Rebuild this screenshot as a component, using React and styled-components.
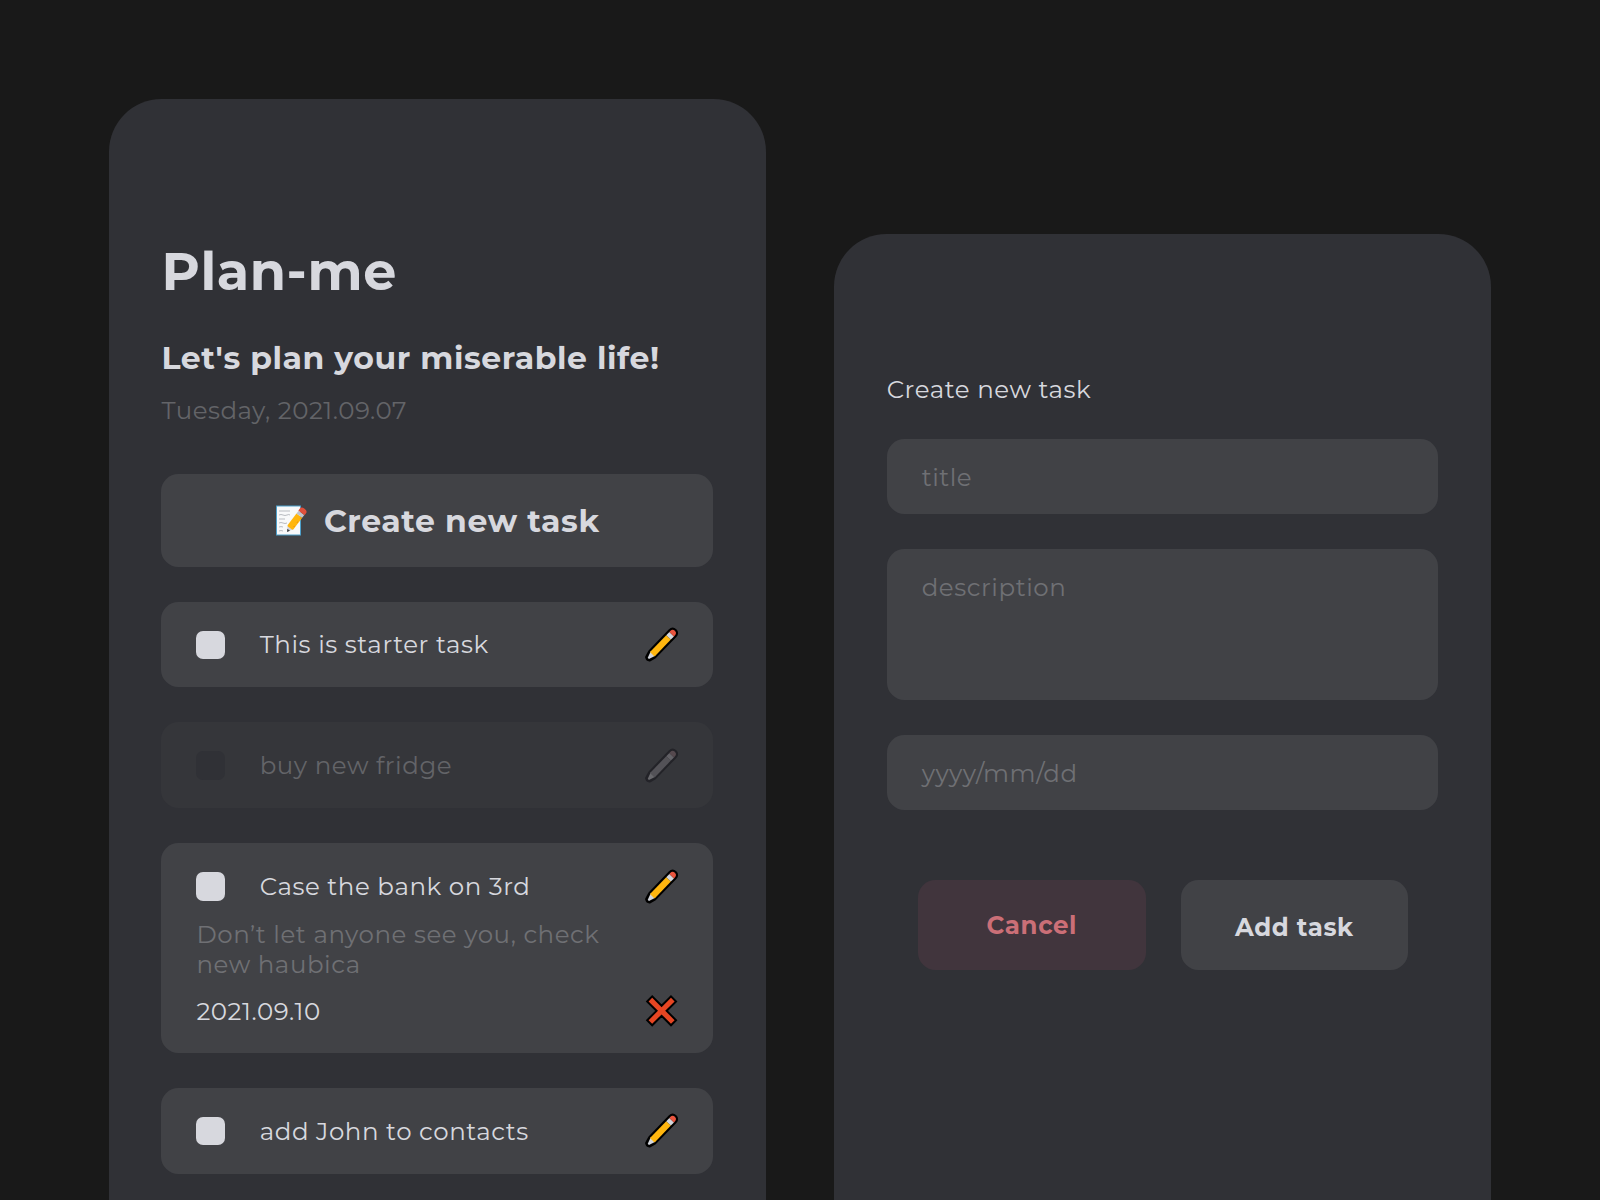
import React from 'react';
import styled, { createGlobalStyle } from 'styled-components';

const color = {
  background: '#191919',
  panel: '#303136',
  card: '#414246',
  cardDone: '#35363a',
  text: '#d7d8de',
  muted: '#636468',
  placeholder: '#6f7074',
  danger: '#cb6f77',
  dangerSurface: '#41353d',
};

const GlobalStyle = createGlobalStyle`
  *, *::before, *::after { box-sizing: border-box; }
  body {
    margin: 0;
    background: ${color.background};
    color: ${color.text};
    font-family: Montserrat, Inter, sans-serif;
    font-size: 24.5px;
    line-height: 30px;
    letter-spacing: 0.57px;
  }
  h1, h2, h3, p { margin: 0; }
`;

const Stage = styled.main`
  display: flex;
  align-items: flex-start;
  gap: 68.7px;
  width: 1600px;
  height: 1200px;
  padding-left: 109px;
  overflow: hidden;
`;

const Panel = styled.section`
  flex: none;
  display: flex;
  flex-direction: column;
  width: 656.6px;
  min-height: 1200px;
  margin-top: ${(p) => p.$top}px;
  padding: 140px 52.4px 0;
  border-radius: 52.5px 52.5px 0 0;
  background: ${color.panel};
`;

const Title = styled.h1`
  font-size: 52.5px;
  font-weight: 700;
  line-height: 64px;
`;

const Subtitle = styled.h2`
  margin-top: 36px;
  font-size: 31.5px;
  font-weight: 700;
  line-height: 38px;
  white-space: nowrap;
`;

const Today = styled.p`
  margin-top: 18px;
  color: ${color.muted};
  letter-spacing: 0.53px;
`;

const CreateButton = styled.button`
  display: flex;
  align-items: center;
  justify-content: center;
  gap: 18px;
  height: 93px;
  margin-top: 48.7px;
  padding: 1.2px 0 0;
  border: 0;
  border-radius: 17.5px;
  background: ${color.card};
  color: ${color.text};
  font: 700 31.5px/38px Montserrat, Inter, sans-serif;
  letter-spacing: 0.6px;
`;

const TaskList = styled.div`
  display: flex;
  flex-direction: column;
  gap: 35px;
  margin-top: 35px;
`;

const TaskCard = styled.article`
  min-height: 85.8px;
  padding: 29px 35px 27px;
  border-radius: 17.5px;
  background: ${(p) => (p.$done ? color.cardDone : color.card)};
  color: ${(p) => (p.$done ? color.muted : color.text)};
`;

const TaskRow = styled.div`
  display: flex;
  align-items: center;
  height: 28.5px;
`;

const Checkbox = styled.span`
  flex: none;
  width: 28.5px;
  height: 28.5px;
  margin-right: 34.8px;
  border-radius: 7px;
  background: ${(p) => (p.$done ? color.panel : color.text)};
`;

const TaskName = styled.h3`
  flex: 1;
  padding-bottom: 1px;
  font-size: inherit;
  font-weight: 400;
`;

const TaskNote = styled.p`
  width: 430px;
  margin-top: 18.2px;
  color: ${color.placeholder};
`;

const TaskFooter = styled.div`
  display: flex;
  align-items: center;
  justify-content: space-between;
  height: 30px;
  margin-top: 17px;
`;

const Heading = styled.h3`
  margin-bottom: 35px;
  font-size: inherit;
  font-weight: 400;
`;

const Field = styled.div`
  height: ${(p) => (p.$tall ? 151 : 75)}px;
  margin-bottom: 35px;
  padding: 23px 35px;
  border-radius: 17.5px;
  background: ${color.card};
  color: ${color.placeholder};
`;

const Actions = styled.div`
  display: flex;
  justify-content: center;
  gap: 35px;
  margin-top: 35px;
  padding-left: 1px;
`;

const ActionButton = styled.button`
  width: 227.5px;
  height: 89.5px;
  padding: ${(p) => (p.$danger ? '1px' : '4px')} 0 0;
  border: 0;
  border-radius: 17.5px;
  background: ${(p) => (p.$danger ? color.dangerSurface : color.card)};
  color: ${(p) => (p.$danger ? color.danger : color.text)};
  font: 700 24.5px/30px Montserrat, Inter, sans-serif;
  letter-spacing: 0.6px;
`;

const Icon = styled.svg`
  flex: none;
  display: block;
  width: ${(p) => p.$size}px;
  height: ${(p) => p.$size}px;
  overflow: visible;
`;

function PencilIcon({ done }) {
  const c = done
    ? { line: '#232328', wood: '#68686c', body: '#535257', metal: '#626166', eraser: '#55494e' }
    : { line: '#000', wood: '#d3d6dc', body: '#ffb60f', metal: '#d3d6dc', eraser: '#e9553f' };
  return (
    <Icon $size={34} viewBox="0 0 34 34">
      <g transform="translate(17.4 16.8) rotate(-46)">
        <path
          d="M-19.4 0 L-18.8 -1.6 L-13 -3.2 H16 Q19.4 -3.2 19.4 0 Q19.4 3.2 16 3.2 H-13 L-18.8 1.6 Z"
          fill={c.line}
          stroke={c.line}
          strokeWidth="4.2"
          strokeLinejoin="round"
        />
        <path d="M-18.8 -0.8 L-12 -3.2 V3.2 L-18.8 0.8 Z" fill={c.wood} />
        <path d="M-13.2 -2.8 L-12 -3.2 H10.3 V3.2 H-12 L-13.2 2.8 Z" fill={c.body} />
        <path d="M10.3 -3.2 H14.8 V3.2 H10.3 Z" fill={c.metal} />
        <path d="M14.8 -3.2 H16 Q19.4 -3.2 19.4 0 Q19.4 3.2 16 3.2 H14.8 Z" fill={c.eraser} />
      </g>
    </Icon>
  );
}

function CrossIcon() {
  return (
    <Icon $size={34} viewBox="-0.8 0 34 34">
      <path
        d="M3.8 7.4 L7.4 3.8 L16.8 13.2 L26.2 3.8 L29.8 7.4 L20.4 16.8 L29.8 26.2 L26.2 29.8 L16.8 20.4 L7.4 29.8 L3.8 26.2 L13.2 16.8 Z"
        fill="#e64623"
        stroke="#000"
        strokeWidth="4"
        strokeLinejoin="miter"
        paintOrder="stroke"
      />
    </Icon>
  );
}

function MemoIcon() {
  return (
    <Icon $size={31} viewBox="0 0 31 31">
      <rect x="1.5" y="1" width="24" height="29" fill="#f8f9fa" stroke="#4d9fca" />
      <path
        d="M4 6 h11 M4 10 q2 -1 4 0 t4 0 t3 0 M4 14 h6 M4 18 q2 -1 4 0 t4 0 M4 22 q2 -.8 4 0 M4 26 q2 -1 4 0"
        fill="none"
        stroke="#b9bcc1"
        strokeWidth="1"
      />
      <g transform="translate(12 27) rotate(-53)">
        <path d="M0 0 L6 -3.6 V3.6 Z" fill="#d4d5d9" />
        <path d="M0 0 L2.8 -1.7 V1.7 Z" fill="#3f4246" />
        <path d="M5 -3 L6 -3.6 H20.5 V3.6 H6 L5 3 Z" fill="#ffb60d" />
        <path d="M8 2.4 H20.5" stroke="#e98d12" strokeWidth="1" strokeDasharray="1.3 4" />
        <path d="M20.5 -3.6 H24 V3.6 H20.5 Z" fill="#bfc4cc" />
        <path d="M24 -3.9 H26.5 Q29.2 -3.9 29.2 0 Q29.2 3.9 26.5 3.9 H24 Z" fill="#e0503b" />
      </g>
    </Icon>
  );
}

const tasks = [
  { name: 'This is starter task' },
  { name: 'buy new fridge', done: true },
  {
    name: 'Case the bank on 3rd',
    note: 'Don’t let anyone see you, check new haubica',
    due: '2021.09.10',
  },
  { name: 'add John to contacts' },
];

function Task({ name, done, note, due }) {
  return (
    <TaskCard $done={done}>
      <TaskRow>
        <Checkbox $done={done} />
        <TaskName>{name}</TaskName>
        <PencilIcon done={done} />
      </TaskRow>
      {note && <TaskNote>{note}</TaskNote>}
      {due && (
        <TaskFooter>
          <span>{due}</span>
          <CrossIcon />
        </TaskFooter>
      )}
    </TaskCard>
  );
}

export default function App() {
  return (
    <>
      <GlobalStyle />
      <Stage>
        <Panel $top={99}>
          <Title>Plan-me</Title>
          <Subtitle>Let's plan your miserable life!</Subtitle>
          <Today>Tuesday, 2021.09.07</Today>
          <CreateButton>
            <MemoIcon />
            <span>Create new task</span>
          </CreateButton>
          <TaskList>
            {tasks.map((task) => (
              <Task key={task.name} {...task} />
            ))}
          </TaskList>
        </Panel>
        <Panel $top={234}>
          <Heading>Create new task</Heading>
          <Field>title</Field>
          <Field $tall>description</Field>
          <Field>yyyy/mm/dd</Field>
          <Actions>
            <ActionButton $danger>Cancel</ActionButton>
            <ActionButton>Add task</ActionButton>
          </Actions>
        </Panel>
      </Stage>
    </>
  );
}
